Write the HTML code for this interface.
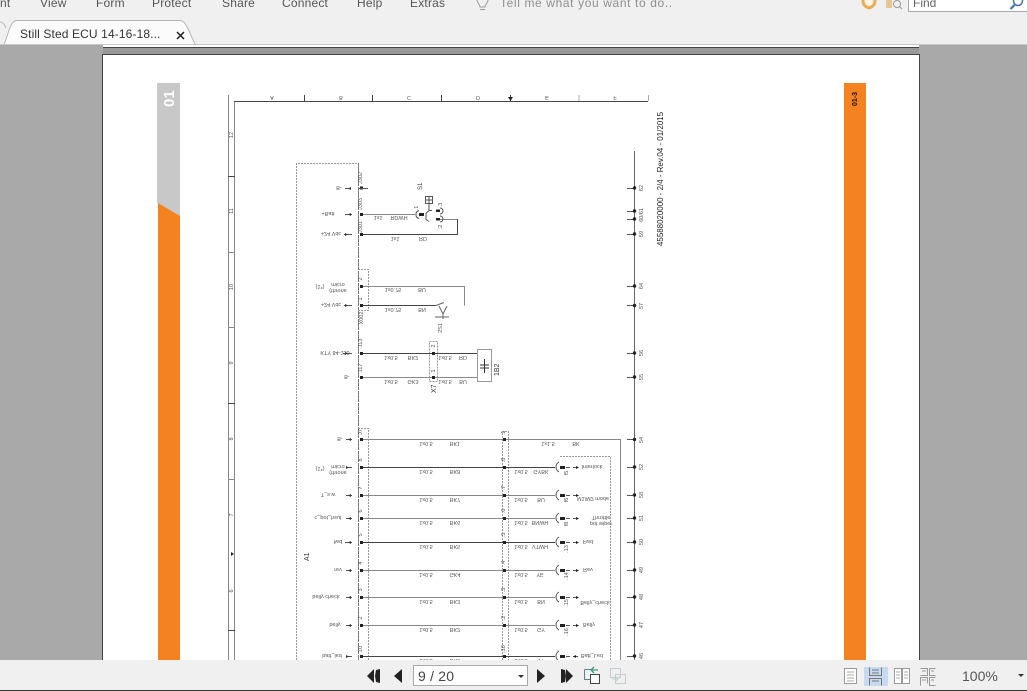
<!DOCTYPE html>
<html><head><meta charset="utf-8"><style>
html,body{margin:0;padding:0;width:1027px;height:691px;overflow:hidden;background:#a9a9a9;font-family:"Liberation Sans",sans-serif}
.a{position:absolute}
#top{left:0;top:0;width:1027px;height:44px;background:#f0f0f0}
.m{position:absolute;top:-4px;font-size:12px;line-height:14px;color:#555;letter-spacing:.2px;white-space:nowrap}
svg text{font-family:"Liberation Sans",sans-serif}
.s text{font-size:5.5px;fill:#555}
.f text{text-anchor:middle}
.v text{text-anchor:middle}
#sch{filter:blur(.25px)}
</style></head><body>
<div class="a" id="top"></div>
<div class="m" style="left:0">nt</div>
<div class="m" style="left:40px">View</div>
<div class="m" style="left:96px">Form</div>
<div class="m" style="left:152px">Protect</div>
<div class="m" style="left:222px">Share</div>
<div class="m" style="left:282px">Connect</div>
<div class="m" style="left:357px">Help</div>
<div class="m" style="left:410px">Extras</div>
<div class="m" style="left:500px;color:#8e8e8e;letter-spacing:.62px">Tell me what you want to do..</div>
<svg class="a" style="left:0;top:0" width="1027" height="46">
<path d="M477 0c0 3 3 4 3 7h5c0-3 3-4 3-7M480 9.500h5" fill="none" stroke="#999"/>
<path d="M863 -2v3c0 4 3 6 6 7 3-1 6-3 6-7v-3" fill="#fbf3e4" stroke="#e8ad55" stroke-width="3"/>
<rect x="886" y="0" width="6" height="8" fill="#e8c48f"/><circle cx="897" cy="4" r="3.500" fill="none" stroke="#999"/><path d="M899.500 6.500l2.500 2.500" stroke="#999"/>
<rect x="908.500" y="-2" width="120" height="13.500" fill="#fff" stroke="#aaa"/>
<text x="913" y="7" font-size="12" fill="#666">Find</text>
<circle cx="1018" cy="1" r="4.500" fill="none" stroke="#3f6fa5" stroke-width="1.500"/><path d="M1014.500 5l-4 4" stroke="#3f6fa5" stroke-width="2"/>
<path d="M0 22c3 0 4 2 6 6" fill="none" stroke="#bbb"/>
<path d="M4 44.500C8 36 10 20 17 20.500H180C187 20.500 190 36 195.500 44.500Z" fill="#fbfbfb" stroke="#b5b5b5"/>
<path d="M5 44.500H195" stroke="#fff"/>
<text x="20" y="38" font-size="12" fill="#333" letter-spacing=".12">Still Sted ECU 14-16-18...</text>
<path d="M177 32l7 7M184 32l-7 7" stroke="#222" stroke-width="1.500"/>
<rect x="0" y="44" width="1027" height="1" fill="#c8c8c8"/>
</svg>
<div class="a" style="left:103px;top:45px;width:816px;height:2px;background:#fff"></div>
<div class="a" style="left:103px;top:47px;width:816px;height:1px;background:#444"></div>
<div class="a" style="left:103px;top:48px;width:816px;height:6px;background:#999"></div>
<div class="a" style="left:102px;top:54px;width:816px;height:606px;background:#fff;border:1px solid #444;border-bottom:0"></div>

<svg id="sch" class="a" style="left:0;top:0" width="1027" height="660" viewBox="0 0 1027 660">
<polygon points="157,83 180,83 180,216 157,203" fill="#c8c8c8"/>
<polygon points="158,203 180,216 180,660 158,660" fill="#f58220"/>
<rect x="844" y="83" width="22" height="577" fill="#f58220"/>
<text transform="translate(174,107) rotate(-90)" font-size="15" font-weight="bold" fill="#fff">01</text>
<text transform="translate(857,106) rotate(-90)" font-size="7" font-weight="bold" fill="#111">01-3</text>

<!-- frame -->
<g fill="none" stroke="#888">
<path d="M228.500 95V660M234.500 102V660"/>
<path d="M228 252.500H235M228 327.500H235M228 479.500H235"/>
<path d="M579 95V101" stroke="#aaa"/><path d="M648.500 95V101" stroke="#aaa"/>
</g>
<g fill="none" stroke="#444">
<path d="M234 101.500H648"/>
<path d="M304.500 95V101M372.500 95V101M441.500 95V101M510.500 95V101"/>
<path d="M228 176.500H235M228 403.500H235M228 630.500H235"/>
<path d="M634.500 151V660" stroke="#666"/>
</g>
<path d="M508 97h5l-2.500 4zM231 552l3 2-3 2z" fill="#222"/>
<g class="s f" fill="#666">
<text transform="matrix(1 0 0 -1 272 96)">A</text><text transform="matrix(1 0 0 -1 341 96)">B</text><text transform="matrix(1 0 0 -1 409 96)">C</text><text transform="matrix(1 0 0 -1 478 96)">D</text><text transform="matrix(1 0 0 -1 547 96)">E</text><text transform="matrix(1 0 0 -1 615 96)">F</text>
</g>
<g class="s v">
<text transform="translate(233,135) rotate(-90)">12</text><text transform="translate(233,211) rotate(-90)">11</text><text transform="translate(233,287) rotate(-90)">10</text><text transform="translate(233,363) rotate(-90)">9</text><text transform="translate(233,439) rotate(-90)">8</text><text transform="translate(233,515) rotate(-90)">7</text><text transform="translate(233,591) rotate(-90)">6</text>
</g>
<text transform="translate(663,246) rotate(-90)" font-size="8.500" fill="#222" textLength="134" lengthAdjust="spacingAndGlyphs">45588020000 - 2/4 - Rev.04 - 01/2015</text>

<!-- dashed boxes -->
<g fill="none" stroke="#999" stroke-dasharray="2 1">
<path d="M296.500 660V163.500H358.500V660" />
<path d="M358 269.500H368.500V310.500H358"/>
<path d="M429.500 341.500H437.500V381.500H429.500Z"/>
<path d="M358 428.500H368.500V660"/>
<path d="M502.500 660V431.500H508.500V660"/>
<path d="M560 456.500H610.500V660"/>
</g>
<path d="M358.500 163V660" stroke="#777" stroke-dasharray="3 1" fill="none"/>

<!-- wires gray -->
<g fill="none" stroke="#888">
<path d="M362 214.500H415M440 219.500H457.500"/>
<path d="M362 286.500H464.500V305.500"/>
<path d="M362 377.500H477"/>
<path d="M362 439.500H621M620.500 439V660"/>
<path d="M362 495.500H555M362 518.500H555M362 570.500H555M362 597.500H555M362 625.500H555"/>
</g>
<g fill="none" stroke="#444">
<path d="M362 234.500H457.500V219"/>
<path d="M362 305.500H436"/>
<path d="M362 353.500H477"/>
<path d="M362 467.500H555M362 542.500H555M362 656.500H555"/>
</g>
<rect x="477.500" y="349.500" width="14" height="32" fill="#fff" stroke="#999"/>
<path d="M484.500 359V373M480 365h9M480 368h9" stroke="#333" fill="none"/>

<!-- left connector pins -->
<g fill="#222">
<rect x="360" y="186.500" width="3" height="3"/><rect x="360" y="213" width="3" height="3"/><rect x="360" y="233" width="3" height="3"/><rect x="360" y="285" width="3" height="3"/><rect x="360" y="304" width="3" height="3"/><rect x="360" y="352" width="3" height="3"/><rect x="360" y="376" width="3" height="3"/>
<rect x="360" y="438" width="3" height="3"/><rect x="360" y="466" width="3" height="3"/><rect x="360" y="494" width="3" height="3"/><rect x="360" y="517" width="3" height="3"/><rect x="360" y="541" width="3" height="3"/><rect x="360" y="569" width="3" height="3"/><rect x="360" y="596" width="3" height="3"/><rect x="360" y="624" width="3" height="3"/><rect x="360" y="655" width="3" height="3"/>
<rect x="432" y="352" width="3" height="3"/><rect x="432" y="376" width="3" height="3"/>
<rect x="503" y="438" width="3" height="3"/><rect x="503" y="466" width="3" height="3"/><rect x="503" y="494" width="3" height="3"/><rect x="503" y="517" width="3" height="3"/><rect x="503" y="541" width="3" height="3"/><rect x="503" y="569" width="3" height="3"/><rect x="503" y="596" width="3" height="3"/><rect x="503" y="624" width="3" height="3"/><rect x="503" y="655" width="3" height="3"/>
</g>
<path d="M358 188.500H368M345 188.500H351M345 214.500H352M344 234.500H352M344 305.500H352M343 353.500H352M346 439.500H352M346 467.500H352M346 495.500H352M346 518.500H352M345 542.500H352M346 570.500H352M346 597.500H352M346 625.500H352M346 656.500H352" stroke="#555" fill="none"/>
<path d="M351 187l-3 1.500 3 1.500zM351 213l-3 1.500 3 1.500zM345 233l3 1.500-3 1.500zM345 304l3 1.500-3 1.500zM345 352l3 1.500-3 1.500zM351 438l-3 1.500 3 1.500zM346 466l3 1.500-3 1.500zM351 494l-3 1.500 3 1.500zM351 517l-3 1.500 3 1.500zM351 541l-3 1.500 3 1.500zM351 569l-3 1.500 3 1.500zM351 596l-3 1.500 3 1.500zM351 624l-3 1.500 3 1.500zM346 655l3 1.500-3 1.500z" fill="#333"/>

<!-- S1 switch -->
<g fill="none" stroke="#555">
<path d="M419 210.500a5 4 0 0 0-3 4 5 4 0 0 0 3 4"/>
<path d="M432 210.500h-3l-3 3v6l3 2" />
<path d="M429 203.500v7"/>
<rect x="425.500" y="196.500" width="7" height="7"/><path d="M429 196.500v7M425.500 200h7"/>
<path d="M440 208a3 3 0 0 1 3 3 3 3 0 0 1-3 3M440 216a3 3 0 0 1 3 3 3 3 0 0 1-3 3"/>
</g>
<rect x="419" y="213" width="5" height="3" fill="#222"/><rect x="436" y="209.500" width="4" height="2.500" fill="#222"/><rect x="436" y="218" width="4" height="2.500" fill="#222"/>
<!-- 2S1 switch -->
<path d="M436 305.500l8-3M439 306l4 8 4-8M435 317h14M443 314v5" fill="none" stroke="#666"/>

<!-- right connectors -->
<g fill="none" stroke="#555">
<path d="M559 462a6 6 0 0 0-3 5 6 6 0 0 0 3 5M559 490a6 6 0 0 0-3 5 6 6 0 0 0 3 5M559 513a6 6 0 0 0-3 5 6 6 0 0 0 3 5M559 537a6 6 0 0 0-3 5 6 6 0 0 0 3 5M559 565a6 6 0 0 0-3 5 6 6 0 0 0 3 5M559 592a6 6 0 0 0-3 5 6 6 0 0 0 3 5M559 620a6 6 0 0 0-3 5 6 6 0 0 0 3 5M559 651a6 6 0 0 0-3 5 6 6 0 0 0 3 5"/>
<path d="M566 467.500h4M573 467.500h5M566 495.500h4M573 495.500h5M566 518.500h4M573 518.500h5M566 542.500h4M573 542.500h5M566 570.500h4M573 570.500h5M566 597.500h4M573 597.500h5M566 625.500h4M573 625.500h5M566 656.500h4M573 656.500h5"/>
</g>
<g fill="#222">
<rect x="560" y="466" width="5" height="3"/><rect x="560" y="494" width="5" height="3"/><rect x="560" y="517" width="5" height="3"/><rect x="560" y="541" width="5" height="3"/><rect x="560" y="569" width="5" height="3"/><rect x="560" y="596" width="5" height="3"/><rect x="560" y="624" width="5" height="3"/><rect x="560" y="655" width="5" height="3"/>
<path d="M576 466l3 1.500-3 1.500zM576 494l3 1.500-3 1.500zM576 517l3 1.500-3 1.500zM576 541l3 1.500-3 1.500zM576 569l3 1.500-3 1.500zM576 596l3 1.500-3 1.500zM576 624l3 1.500-3 1.500zM576 655l-3 1.500 3 1.500z"/>
</g>

<!-- bus ticks -->
<g stroke="#555" fill="none">
<path d="M627 188.500H635M627 211.500H635M627 219.500H635M627 234.500H635M627 286.500H635M627 305.500H635M627 353.500H635M627 377.500H635M627 439.500H635M627 467.500H635M627 495.500H635M627 518.500H635M627 542.500H635M627 570.500H635M627 597.500H635M627 625.500H635M627 656.500H635"/>
</g>
<g fill="#222">
<circle cx="634.500" cy="188" r="1.700"/><circle cx="634.500" cy="211" r="1.700"/><circle cx="634.500" cy="219" r="1.700"/><circle cx="634.500" cy="234" r="1.700"/><circle cx="634.500" cy="286" r="1.700"/><circle cx="634.500" cy="305.500" r="1.700"/><circle cx="634.500" cy="353" r="1.700"/><circle cx="634.500" cy="377" r="1.700"/><circle cx="634.500" cy="439.500" r="1.700"/><circle cx="634.500" cy="467" r="1.700"/><circle cx="634.500" cy="495" r="1.700"/><circle cx="634.500" cy="518" r="1.700"/><circle cx="634.500" cy="542" r="1.700"/><circle cx="634.500" cy="570" r="1.700"/><circle cx="634.500" cy="597" r="1.700"/><circle cx="634.500" cy="625" r="1.700"/><circle cx="634.500" cy="656" r="1.700"/>
</g>
<g class="s v">
<text transform="translate(643,188) rotate(-90)">62</text><text transform="translate(643,215) rotate(-90)">60/61</text><text transform="translate(643,234) rotate(-90)">59</text><text transform="translate(643,286) rotate(-90)">64</text><text transform="translate(643,306) rotate(-90)">57</text><text transform="translate(643,353) rotate(-90)">56</text><text transform="translate(643,377) rotate(-90)">55</text><text transform="translate(643,440) rotate(-90)">54</text><text transform="translate(643,467) rotate(-90)">52</text><text transform="translate(643,495) rotate(-90)">58</text><text transform="translate(643,518) rotate(-90)">51</text><text transform="translate(643,542) rotate(-90)">50</text><text transform="translate(643,570) rotate(-90)">49</text><text transform="translate(643,597) rotate(-90)">48</text><text transform="translate(643,625) rotate(-90)">47</text><text transform="translate(643,656) rotate(-90)">46</text>
</g>

<!-- vertical small labels -->
<g class="s v">
<text transform="translate(362,178) rotate(-90)">J302</text><text transform="translate(362,204) rotate(-90)">J303</text><text transform="translate(362,227) rotate(-90)">J301</text>
<text transform="translate(362,279) rotate(-90)">2</text><text transform="translate(362,299) rotate(-90)">1</text>
<text transform="translate(363,318) rotate(-90)">X002</text>
<text transform="translate(442,328) rotate(-90)">2S1</text>
<text transform="translate(362,343) rotate(-90)">J13</text><text transform="translate(362,368) rotate(-90)">J17</text>
<text transform="translate(435,346) rotate(-90)">2</text><text transform="translate(435,371) rotate(-90)">1</text>
<text transform="translate(442,205) rotate(-90)">.3</text><text transform="translate(442,227) rotate(-90)">.2</text><text transform="translate(418,208) rotate(-90)">.1</text>
<text transform="translate(362,432) rotate(-90)">J7</text><text transform="translate(362,460) rotate(-90)">8</text><text transform="translate(362,488) rotate(-90)">7</text><text transform="translate(362,511) rotate(-90)">6</text><text transform="translate(362,535) rotate(-90)">5</text><text transform="translate(362,563) rotate(-90)">4</text><text transform="translate(362,590) rotate(-90)">3</text><text transform="translate(362,618) rotate(-90)">2</text><text transform="translate(362,649) rotate(-90)">10</text>
<text transform="translate(505,433) rotate(-90)">.1</text><text transform="translate(505,460) rotate(-90)">.8</text><text transform="translate(505,488) rotate(-90)">.7</text><text transform="translate(505,511) rotate(-90)">.6</text><text transform="translate(505,535) rotate(-90)">.5</text><text transform="translate(505,563) rotate(-90)">.4</text><text transform="translate(505,590) rotate(-90)">.3</text><text transform="translate(505,618) rotate(-90)">.2</text><text transform="translate(505,649) rotate(-90)">.10</text>
<text transform="translate(568,473) rotate(-90)">f5</text><text transform="translate(568,500) rotate(-90)">f6</text><text transform="translate(568,524) rotate(-90)">f8</text><text transform="translate(568,549) rotate(-90)">.13</text><text transform="translate(568,576) rotate(-90)">.14</text><text transform="translate(568,603) rotate(-90)">.15</text><text transform="translate(568,632) rotate(-90)">.16</text>
</g>
<text transform="translate(422,190) rotate(-90)" font-size="6" fill="#333">S1</text>
<text transform="translate(499,376) rotate(-90)" font-size="7" fill="#333">1B2</text>
<text transform="translate(436,393) rotate(-90)" font-size="7" fill="#333">X7</text>
<text transform="translate(309,561) rotate(-90)" font-size="7" fill="#333">A1</text>

<!-- flipped labels -->
<g class="s f">
<text transform="matrix(1 0 0 -1 339 186)">B-</text>
<text transform="matrix(1 0 0 -1 328 212)" font-size="6">+Batt</text>
<text transform="matrix(1 0 0 -1 331 232)">+24 Vdc</text>
<text transform="matrix(1 0 0 -1 378 216)">1x1</text><text transform="matrix(1 0 0 -1 399 216)">RDWH</text>
<text transform="matrix(1 0 0 -1 395 237)">1x1</text><text transform="matrix(1 0 0 -1 423 237)">RD</text>
<text transform="matrix(1 0 0 -1 338 283)">micro</text><text transform="matrix(1 0 0 -1 338 289)">(throne</text>
<text transform="matrix(1 0 0 -1 320 285)" font-size="6">(1*)</text>
<text transform="matrix(1 0 0 -1 331 303)">+24 Vdc</text>
<text transform="matrix(1 0 0 -1 393 288)">1x0.75</text><text transform="matrix(1 0 0 -1 422 288)">BU</text>
<text transform="matrix(1 0 0 -1 393 308)">1x0.75</text><text transform="matrix(1 0 0 -1 422 308)">BN</text>
<text transform="matrix(1 0 0 -1 335 351)">KTY 84-130</text><text transform="matrix(1 0 0 -1 347 375)">B-</text>
<text transform="matrix(1 0 0 -1 391 356)">1x0.5</text><text transform="matrix(1 0 0 -1 413 356)">BK2</text><text transform="matrix(1 0 0 -1 445 356)">1x0.5</text><text transform="matrix(1 0 0 -1 463 356)">RD</text>
<text transform="matrix(1 0 0 -1 391 380)">1x0.5</text><text transform="matrix(1 0 0 -1 413 380)">GK3</text><text transform="matrix(1 0 0 -1 445 380)">1x0.5</text><text transform="matrix(1 0 0 -1 463 380)">BU</text>

<text transform="matrix(1 0 0 -1 340 437)">B-</text>
<text transform="matrix(1 0 0 -1 338 465)">micro</text><text transform="matrix(1 0 0 -1 338 471)">(throne</text>
<text transform="matrix(1 0 0 -1 320 467)" font-size="6">(1*)</text>
<text transform="matrix(1 0 0 -1 328 493)">T_s.w</text>
<text transform="matrix(1 0 0 -1 328 516)">c_pot_hsut</text>
<text transform="matrix(1 0 0 -1 338 540)">fwd</text>
<text transform="matrix(1 0 0 -1 338 568)">rev</text>
<text transform="matrix(1 0 0 -1 326 595)">belly check</text>
<text transform="matrix(1 0 0 -1 335 623)">belly</text>
<text transform="matrix(1 0 0 -1 332 654)">batt_led</text>

<text transform="matrix(1 0 0 -1 426 442)">1x0.5</text><text transform="matrix(1 0 0 -1 455 442)">BK1</text>
<text transform="matrix(1 0 0 -1 426 470)">1x0.5</text><text transform="matrix(1 0 0 -1 455 470)">BK8</text>
<text transform="matrix(1 0 0 -1 426 498)">1x0.5</text><text transform="matrix(1 0 0 -1 455 498)">BK7</text>
<text transform="matrix(1 0 0 -1 426 521)">1x0.5</text><text transform="matrix(1 0 0 -1 455 521)">BK6</text>
<text transform="matrix(1 0 0 -1 426 545)">1x0.5</text><text transform="matrix(1 0 0 -1 455 545)">BK5</text>
<text transform="matrix(1 0 0 -1 426 573)">1x0.5</text><text transform="matrix(1 0 0 -1 455 573)">GK4</text>
<text transform="matrix(1 0 0 -1 426 600)">1x0.5</text><text transform="matrix(1 0 0 -1 455 600)">BK3</text>
<text transform="matrix(1 0 0 -1 426 628)">1x0.5</text><text transform="matrix(1 0 0 -1 455 628)">BK2</text>
<text transform="matrix(1 0 0 -1 426 659)">1x0.5</text><text transform="matrix(1 0 0 -1 455 659)">BK9</text>

<text transform="matrix(1 0 0 -1 548 442)">1x1.5</text><text transform="matrix(1 0 0 -1 576 442)">BK</text>
<text transform="matrix(1 0 0 -1 521 470)">1x0.5</text><text transform="matrix(1 0 0 -1 541 470)">GYBK</text>
<text transform="matrix(1 0 0 -1 521 498)">1x0.5</text><text transform="matrix(1 0 0 -1 541 498)">BU</text>
<text transform="matrix(1 0 0 -1 521 521)">1x0.5</text><text transform="matrix(1 0 0 -1 540 521)">BNWH</text>
<text transform="matrix(1 0 0 -1 521 545)">1x0.5</text><text transform="matrix(1 0 0 -1 540 545)">VTWH</text>
<text transform="matrix(1 0 0 -1 521 573)">1x0.5</text><text transform="matrix(1 0 0 -1 540 573)">YE</text>
<text transform="matrix(1 0 0 -1 521 600)">1x0.5</text><text transform="matrix(1 0 0 -1 541 600)">BN</text>
<text transform="matrix(1 0 0 -1 521 628)">1x0.5</text><text transform="matrix(1 0 0 -1 541 628)">GY</text>
<text transform="matrix(1 0 0 -1 521 659)">1x0.5</text><text transform="matrix(1 0 0 -1 541 659)">VT</text>

<text transform="matrix(1 0 0 -1 592 465)">Interlock</text>
<text transform="matrix(1 0 0 -1 593 497)">M1/M2 mode</text>
<text transform="matrix(1 0 0 -1 601 516)">Throttle</text><text transform="matrix(1 0 0 -1 601 522)">pot wiper</text>
<text transform="matrix(1 0 0 -1 588 540)">Fwd</text>
<text transform="matrix(1 0 0 -1 588 568)">Rev</text>
<text transform="matrix(1 0 0 -1 595 601)">Belly_check</text>
<text transform="matrix(1 0 0 -1 589 623)">Belly</text>
<text transform="matrix(1 0 0 -1 592 654)">Batt_Led</text>
</g>
</svg>

<!-- bottom bar -->
<div class="a" style="left:0;top:660px;width:1027px;height:30px;background:#f0f0f0"></div>
<div class="a" style="left:0;top:690px;width:1027px;height:1px;background:#333"></div>
<svg class="a" style="left:0;top:660px" width="1027" height="31">
<g fill="#222">
<path d="M374 9l-7 7 7 7zM376 10l4-1v14l-4-1-1-6zM402 9l-8 7 8 7zM537 9l8 7-8 7zM561 9l4 1 1 6-1 6-4 1zM566 9l7 7-7 7z"/>
</g>
<rect x="413.500" y="5.500" width="114" height="20" fill="#fff" stroke="#aaa"/>
<text x="418" y="21" font-size="14" fill="#444" letter-spacing=".2">9 / 20</text>
<path d="M518 15h6l-3 3z" fill="#333"/>
<g fill="none" stroke="#5f7f96">
<path d="M584.500 9.500h8M584.500 9.500v10h6"/>
</g>
<rect x="590.500" y="14.500" width="9" height="9" fill="#fff" stroke="#444"/>
<path d="M591 10h7M594 7l-3 3 3 3" fill="none" stroke="#3e9a7c" stroke-width="1.300"/>
<g fill="none" stroke="#c2ccd2"><rect x="610.500" y="8.500" width="10" height="9"/><rect x="615.500" y="14.500" width="10" height="9"/><path d="M612 19h6M616 17l2 2-2 2" stroke="#b8d8cc"/></g>
<rect x="864" y="7" width="24" height="19" fill="#c7daf2"/>
<g fill="#fff" stroke="#999">
<rect x="844.500" y="8.500" width="12" height="15"/>
<rect x="894.500" y="8.500" width="7" height="15"/><rect x="902.500" y="8.500" width="7" height="15"/>
</g>
<path d="M847 12h7M847 15h7M847 18h7M847 21h7M896 12h4M896 15h4M896 18h4M904 12h4M904 15h4M904 18h4" stroke="#aaa"/>
<g fill="none" stroke="#777"><path d="M869.500 7.500v8h12v-8M869.500 25.500v-7h12v7M872 10h7M872 13h7M872 21h7"/></g>
<g fill="none" stroke="#999"><path d="M920.500 8.500h7v7h-7M935.500 8.500h-6v7h6M920.500 25.500v-8h7v6M935.500 25.500h-6v-8h6M922 11h4M931 11h3M922 20h4M931 20h3"/></g>
<text x="962" y="21" font-size="14" fill="#555">100%</text>
<path d="M1018 14h6l-3 3z" fill="#333"/>
</svg>
</body></html>
